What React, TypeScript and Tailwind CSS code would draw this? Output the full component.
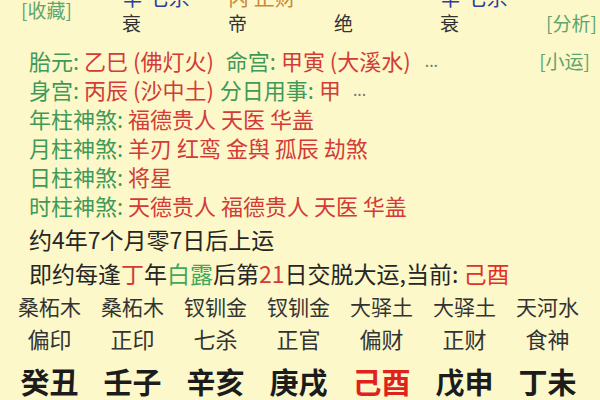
import React from 'react';

const green = 'text-[#3f9a58]';
const red = 'text-[#d23b38]';

const pillars = [
  { top: '辛 七杀', topColor: 'text-[#2b3f9e]', state: '衰' },
  { top: '丙 正财', topColor: 'text-[#c98a3c]', state: '帝' },
  { top: '', topColor: '', state: '绝' },
  { top: '辛 七杀', topColor: 'text-[#2b3f9e]', state: '衰' },
];

const nayin = ['桑柘木', '桑柘木', '钗钏金', '钗钏金', '大驿土', '大驿土', '天河水'];
const shishen = ['偏印', '正印', '七杀', '正官', '偏财', '正财', '食神'];
const ganzhi = ['癸丑', '壬子', '辛亥', '庚戌', '己酉', '戊申', '丁未'];

function Label({ children }: { children: React.ReactNode }) {
  return <span className={green}>{children}</span>;
}

function Val({ children }: { children: React.ReactNode }) {
  return <span className={red}>{children}</span>;
}

export default function App() {
  return (
    <div
      className="w-[600px] h-[400px] overflow-hidden bg-[#fcf8c9] flex flex-col"
      style={{ fontFamily: '"Noto Sans CJK SC", "Noto Sans", sans-serif' }}
    >
      {/* pillar header */}
      <div className="flex h-[46px] shrink-0">
        <div className="w-[122px] shrink-0 pl-[21px]">
          <span className="text-[19px] leading-[19px] text-[#5ea56f] block whitespace-nowrap">[收藏]</span>
        </div>
        {pillars.map((p, i) => (
          <div key={i} className="w-[106px] shrink-0 flex flex-col">
            <div className={`h-[8px] mt-[-14px] text-[21px] leading-[20px] whitespace-pre ${p.topColor}`}>
              {p.top}
            </div>
            <div className="mt-[19px] text-[19px] leading-[20px] text-[#333]">{p.state}</div>
          </div>
        ))}
        <div className="flex-1 flex justify-end pr-[9px] pt-[12px]">
          <span className="text-[19px] leading-[22px] text-[#5ea56f] whitespace-nowrap">[分析]</span>
        </div>
      </div>

      {/* info lines */}
      <div className="flex flex-col pl-[29px] pr-[10px] text-[22px] leading-[29px]">
        <div className="h-[29px] flex whitespace-pre">
          <Label>胎元: </Label>
          <Val>乙巳 (佛灯火)</Val>
          <span className="ml-[12px]"><Label>命宫: </Label></span>
          <Val>甲寅 (大溪水)</Val>
          <span className="ml-[14px] text-[#777] text-[16px]">...</span>
          <span className="ml-auto text-[19px] text-[#5ea56f]">[小运]</span>
        </div>
        <div className="h-[29px] flex whitespace-pre">
          <Label>身宫: </Label>
          <Val>丙辰 (沙中土)</Val>
          <span className="ml-[6px]"><Label>分日用事: </Label></span>
          <Val>甲</Val>
          <span className="ml-[12px] text-[#777] text-[16px]">...</span>
        </div>
        <div className="h-[29px] whitespace-pre">
          <Label>年柱神煞: </Label>
          <Val>福德贵人 天医 华盖</Val>
        </div>
        <div className="h-[29px] whitespace-pre">
          <Label>月柱神煞: </Label>
          <Val>羊刃 红鸾 金舆 孤辰 劫煞</Val>
        </div>
        <div className="h-[29px] whitespace-pre">
          <Label>日柱神煞: </Label>
          <Val>将星</Val>
        </div>
        <div className="h-[29px] whitespace-pre">
          <Label>时柱神煞: </Label>
          <Val>天德贵人 福德贵人 天医 华盖</Val>
        </div>
      </div>

      {/* luck start */}
      <div className="mt-[2px] pl-[29px] text-[23px] leading-[34px] text-[#262626]">
        <div className="h-[34px]">约4年7个月零7日后上运</div>
        <div className="h-[34px] whitespace-pre">
          即约每逢<span className={red}>丁</span>年<span className="text-[#3fa85c]">白露</span>后第
          <span className={red}>21</span>日交脱大运,当前: <span className="text-[#e0302a]">己酉</span>
        </div>
      </div>

      {/* pillar table */}
      <div className="grid grid-cols-7 pl-[8px] pr-[11px]">
        {nayin.map((n, i) => (
          <div key={i} className="h-[34px] flex items-center justify-center text-[21px] text-[#333]">
            {n}
          </div>
        ))}
        {shishen.map((n, i) => (
          <div key={i} className="h-[28px] flex items-center justify-center text-[22px] text-[#333]">
            {n}
          </div>
        ))}
        {ganzhi.map((n, i) => (
          <div
            key={i}
            className={`h-[58px] pt-[2px] flex items-center justify-center text-[29px] font-bold ${
              i === 4 ? 'text-[#e0221c]' : 'text-[#1c1c1c]'
            }`}
          >
            {n}
          </div>
        ))}
      </div>
    </div>
  );
}
